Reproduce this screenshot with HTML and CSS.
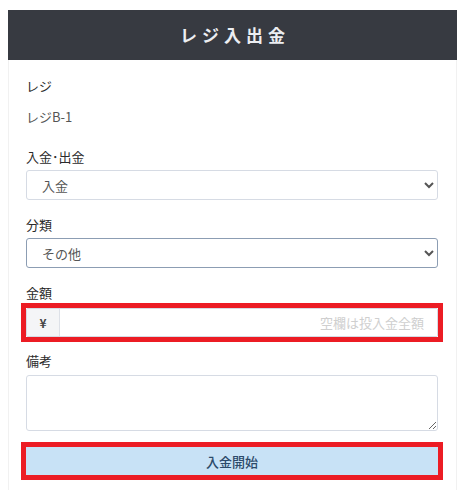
FILE: index.html
```html
<!DOCTYPE html>
<html lang="ja">
<head>
<meta charset="utf-8">
<title>レジ入出金</title>
<link rel="stylesheet" href="styles.css">
</head>
<body>
<div class="card">
  <div class="card-header">レジ入出金</div>
  <div class="card-body">
    <div class="label first">レジ</div>
    <div class="value">レジB-1</div>

    <div class="label l-type">入金･出金</div>
    <select class="control select">
      <option>入金</option>
      <option>出金</option>
    </select>

    <div class="label l-cat">分類</div>
    <select class="control select focus">
      <option>その他</option>
    </select>

    <div class="label l-amount">金額</div>
    <div class="highlight">
      <div class="input-group">
        <span class="addon">¥</span>
        <input class="amount" type="text" placeholder="空欄は投入金全額">
      </div>
    </div>

    <div class="label l-note">備考</div>
    <textarea class="control note"></textarea>

    <div class="highlight btn-wrap">
      <button class="btn" type="button">入金開始</button>
    </div>
  </div>
</div>
</body>
</html>
```

FILE: styles.css
```css
* { box-sizing: border-box; }
html, body { margin: 0; padding: 0; background: #fff; }
body {
  padding: 10px 4px 0 8px;
  font-family: "Noto Sans CJK JP", "Noto Sans", sans-serif;
  font-size: 13px;
  color: #333;
}
.card {
  width: 449px;
  border-left: 1px solid #f1f1f1;
  border-right: 1px solid #f1f1f1;
  min-height: 480px;
}
.card-header {
  height: 50px;
  margin: 0 -1px;
  background: #373a41;
  color: #eceef2;
  font-size: 17px;
  font-weight: 700;
  letter-spacing: 5px;
  text-align: center;
  line-height: 50px;
  padding-left: 5px;
}
.card-body {
  padding: 16px 18px 0 17px;
}
.label {
  font-size: 13px;
  line-height: 20px;
  font-weight: 400;
  color: #2b2b2b;
}
.value {
  margin-top: 11px;
  line-height: 20px;
  color: #555;
  font-size: 13px;
}
.l-type { margin-top: 20px; }
.l-cat { margin-top: 15px; }
.l-amount { margin-top: 15px; }
.l-note { margin-top: 9px; }

.control {
  display: block;
  width: 412px;
  font-family: inherit;
  font-size: 13px;
  color: #555;
  background: #fff;
  border: 1px solid #d6dbe4;
  border-radius: 3px;
}
.select {
  height: 30px;
  margin-top: 3px;
  padding: 0 8px 0 11px;
}
.select.focus {
  border-color: #8c9db3;
}
.highlight {
  margin: 0 -5px;
  border: 5px solid #ec1c24;
  width: 422px;
}
.input-group {
  display: flex;
  height: 29px;
  border: 1px solid #d6dbe4;
  border-radius: 2px;
}
.addon {
  width: 33px;
  background: #f4f5f7;
  border-right: 1px solid #dde1e8;
  display: flex;
  align-items: center;
  justify-content: center;
  font-weight: 700;
  color: #444;
  font-size: 12px;
}
.amount {
  flex: 1;
  border: 0;
  outline: 0;
  text-align: right;
  padding: 0 13px 0 8px;
  font-family: inherit;
  font-size: 13px;
  color: #555;
  background: #fff;
}
.amount::placeholder { color: #cfcfcf; }
.note {
  height: 56px;
  margin-top: 4px;
  resize: vertical;
}
.btn-wrap {
  margin-top: 11px;
}
.btn {
  display: block;
  width: 100%;
  height: 28px;
  border: 0;
  background: #c8e2f6;
  color: #2c4a6a;
  font-family: inherit;
  font-size: 13px;
  font-weight: 500;
  padding: 0;
}
```
